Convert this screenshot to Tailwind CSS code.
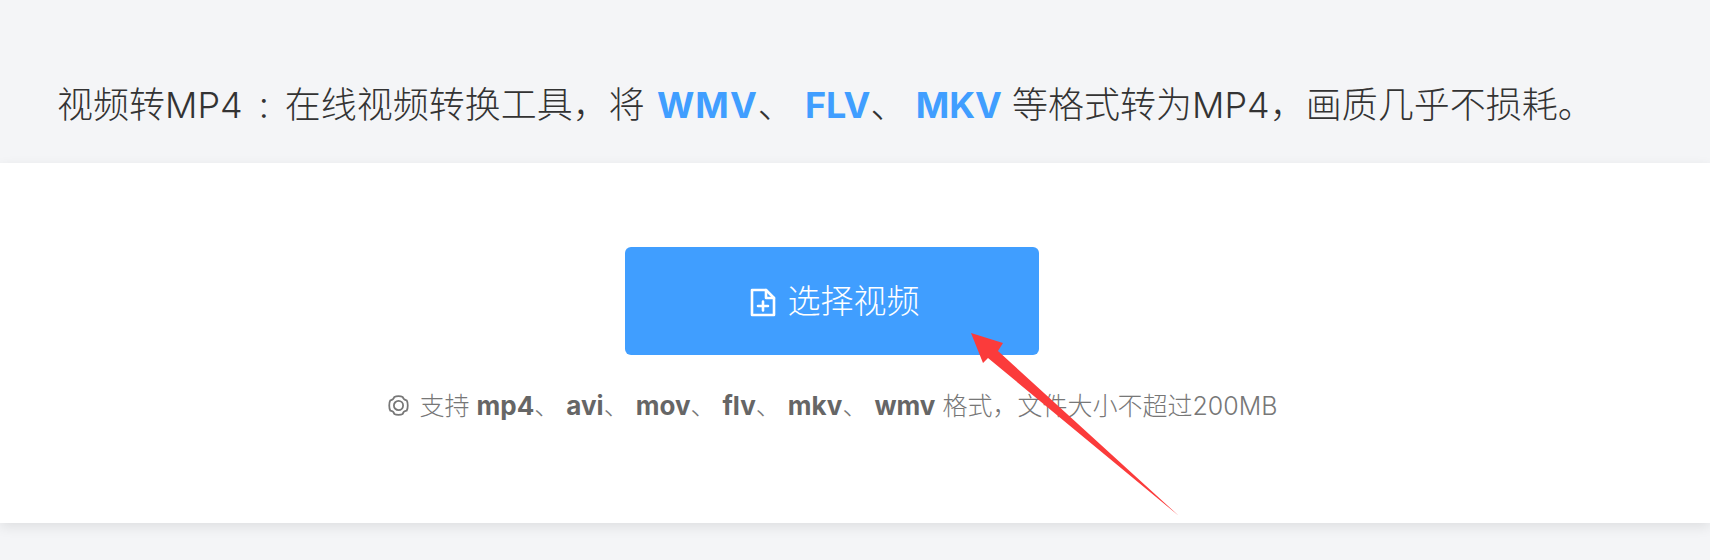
<!DOCTYPE html>
<html lang="zh-CN">
  <head>
    <meta charset="UTF-8" />
    <title>视频转MP4</title>
    <script src="https://cdn.jsdelivr.net/npm/@tailwindcss/browser@4"></script>
  </head>
  <body class="relative h-[560px] overflow-hidden bg-[#f4f5f7] font-['Inter','Noto_Sans_CJK_SC',sans-serif]">
    <header class="flex h-[163px] items-center pl-[57px] pt-[47px]">
      <h1 class="text-[36px] font-light whitespace-nowrap text-[#333]">
        视频转MP4<span class="mx-[16px]">:</span>在线视频转换工具，将
        <strong class="ml-[2px] font-bold tracking-[1px] text-[#409eff]">WMV</strong>、
        <strong class="ml-[1px] font-bold text-[#409eff]">FLV</strong>、
        <strong class="-ml-px font-bold text-[#409eff]">MKV</strong>
        等格式转为MP4，画质几乎不损耗。
      </h1>
    </header>

    <main class="flex h-[360px] flex-col items-center bg-white pt-[84px] pr-[46px] shadow-[0_4px_12px_rgba(0,0,0,0.09)]">
      <button class="flex h-[108px] w-[414px] items-center justify-center gap-3 rounded-md bg-[#409eff] pt-[2px] pl-[5px] text-[33px] font-light text-white">
        <svg class="h-[29px] w-[26px]" viewBox="0 0 26 29" fill="none" stroke="currentColor" stroke-width="2.6" stroke-linejoin="round" stroke-linecap="round">
          <path d="M2 2h14l8 8v17H2z" />
          <path d="M16 2v8h8" />
          <path d="M8 18h10M13 13.5v9" />
        </svg>
        选择视频
      </button>
      <p class="mt-[31px] flex items-center text-[25px] font-light whitespace-nowrap text-[#777]">
        <svg class="mr-[10px] h-[23px] w-[23px]" viewBox="0 0 22 22" fill="none" stroke="currentColor" stroke-width="1.7" stroke-linejoin="round">
          <path d="M7 2.8C9 1.8 13 1.8 15 2.8C15.4 4.8 16.8 5.8 18.8 6C20.2 8.4 20.2 13.6 18.8 16C16.8 16.2 15.4 17.2 15 19.2C13 20.2 9 20.2 7 19.2C6.6 17.2 5.2 16.2 3.2 16C1.8 13.6 1.8 8.4 3.2 6C5.2 5.8 6.6 4.8 7 2.8z" />
          <circle cx="11" cy="11" r="4.4" />
        </svg>
        <span class="whitespace-pre">支持 <b class="text-[26px] font-bold text-[#666]">mp4</b>、 <b class="text-[26px] font-bold text-[#666]">avi</b>、 <b class="text-[26px] font-bold text-[#666]">mov</b>、 <b class="text-[26px] font-bold text-[#666]">flv</b>、 <b class="text-[26px] font-bold text-[#666]">mkv</b>、 <b class="text-[26px] font-bold text-[#666]">wmv</b> 格式，文件大小不超过200MB</span>
      </p>
    </main>

    <!-- annotation arrow drawn over the page -->
    <svg class="absolute top-0 left-0 h-[560px] w-[1710px]" viewBox="0 0 1710 560">
      <polygon fill="#fb3b3b" points="971,333 1003,343 998,351 1179,516 988,358 983,363" />
    </svg>
  </body>
</html>
